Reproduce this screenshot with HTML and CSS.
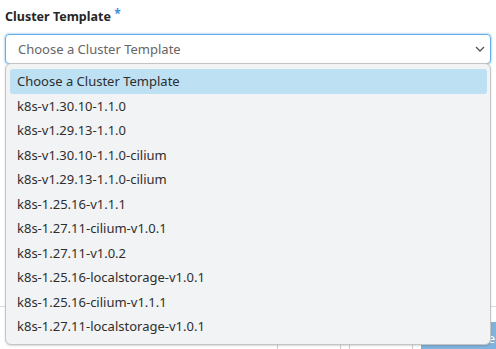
FILE: index.html
```html
<!DOCTYPE html>
<html lang="en">
<head>
    <meta charset="UTF-8">
    <title>Cluster Template</title>
    <link rel="stylesheet" href="styles.css">
</head>
<body>
    <div class="form">
        <div class="field">
            <label class="field-label">Cluster Template <span class="req">*</span></label>
            <div class="select-wrap">
                <div class="select">
                    <span class="select-text">Choose a Cluster Template</span>
                    <svg class="chevron" width="10" height="6" viewBox="0 0 10 6"><path d="M1 1 L5 5 L9 1" fill="none" stroke="#555" stroke-width="1.3"/></svg>
                </div>
                <ul class="dropdown">
                    <li class="active">Choose a Cluster Template</li>
                    <li>k8s-v1.30.10-1.1.0</li>
                    <li>k8s-v1.29.13-1.1.0</li>
                    <li>k8s-v1.30.10-1.1.0-cilium</li>
                    <li>k8s-v1.29.13-1.1.0-cilium</li>
                    <li>k8s-1.25.16-v1.1.1</li>
                    <li>k8s-1.27.11-cilium-v1.0.1</li>
                    <li>k8s-1.27.11-v1.0.2</li>
                    <li>k8s-1.25.16-localstorage-v1.0.1</li>
                    <li>k8s-1.25.16-cilium-v1.1.1</li>
                    <li>k8s-1.27.11-localstorage-v1.0.1</li>
                </ul>
            </div>
        </div>
        <div class="bg-box one"></div>
        <div class="bg-box two"></div>
    </div>
    <div class="divider"></div>
    <div class="bottom-row">
        <div class="cells">
            <div class="cell"></div>
            <div class="cell"></div>
        </div>
        <button class="submit">Create</button>
    </div>
</body>
</html>
```

FILE: styles.css
```css
body {
    margin: 0;
    background: #fff;
    font-family: 'Noto Sans', 'Open Sans', sans-serif;
    overflow: hidden;
}

.form {
    padding: 5px 5px 0 5px;
}

.field-label {
    display: block;
    font-size: 12.5px;
    font-weight: bold;
    color: #262626;
    height: 29px;
    line-height: 24px;
}

.req {
    color: #3f8fd6;
    font-size: 12px;
    vertical-align: top;
    position: relative;
    top: -3px;
}

.select-wrap {
    position: relative;
}

.select {
    height: 30px;
    border: 1px solid #66aee8;
    border-radius: 4px;
    box-shadow: 0 0 0 1px #cfe5f7, 0 0 3px rgba(80, 160, 230, 0.5);
    box-sizing: border-box;
    display: flex;
    align-items: center;
    padding: 0 5px 0 12px;
    justify-content: space-between;
}

.select-text {
    font-size: 13px;
    color: #666;
}

.dropdown {
    position: absolute;
    z-index: 2;
    left: 0;
    top: 29px;
    width: 486px;
    margin: 0;
    padding: 5px 3px 5px 4px;
    list-style: none;
    background: #f2f3f5;
    border: 1px solid #c4c4c4;
    border-radius: 6px;
    box-sizing: border-box;
    box-shadow: 0 1px 2px rgba(0, 0, 0, 0.15);
}

.dropdown li {
    height: 24.5px;
    line-height: 24.5px;
    padding-left: 7px;
    font-size: 13px;
    color: #2e2e2e;
    border-radius: 3px;
}

.dropdown li.active {
    background: #bde0f3;
}

.bg-box {
    border: 1px solid #c8c8c8;
    border-radius: 4px;
}

.bg-box.one {
    margin-top: 41px;
    height: 29px;
}

.bg-box.two {
    margin-top: 64px;
    height: 105px;
    border-bottom: none;
    border-radius: 4px 4px 0 0;
    border-color: #dcdcdc;
}

.divider {
    height: 1px;
    background: #dcdcdc;
}

.bottom-row {
    display: flex;
    justify-content: flex-end;
    align-items: flex-start;
    padding-top: 15px;
}

.cells {
    display: flex;
    gap: 8px;
    margin-top: 22px;
    margin-right: 8px;
}

.cell {
    width: 62px;
    height: 20px;
    border-left: 1px solid #cfcfcf;
    border-right: 1px solid #cfcfcf;
}

.submit {
    width: 75px;
    height: 32px;
    background: #7fb3dd;
    color: #fff;
    border: none;
    font-size: 13px;
    font-family: 'Noto Sans', sans-serif;
    text-align: right;
    padding-right: 1px;
}
```
